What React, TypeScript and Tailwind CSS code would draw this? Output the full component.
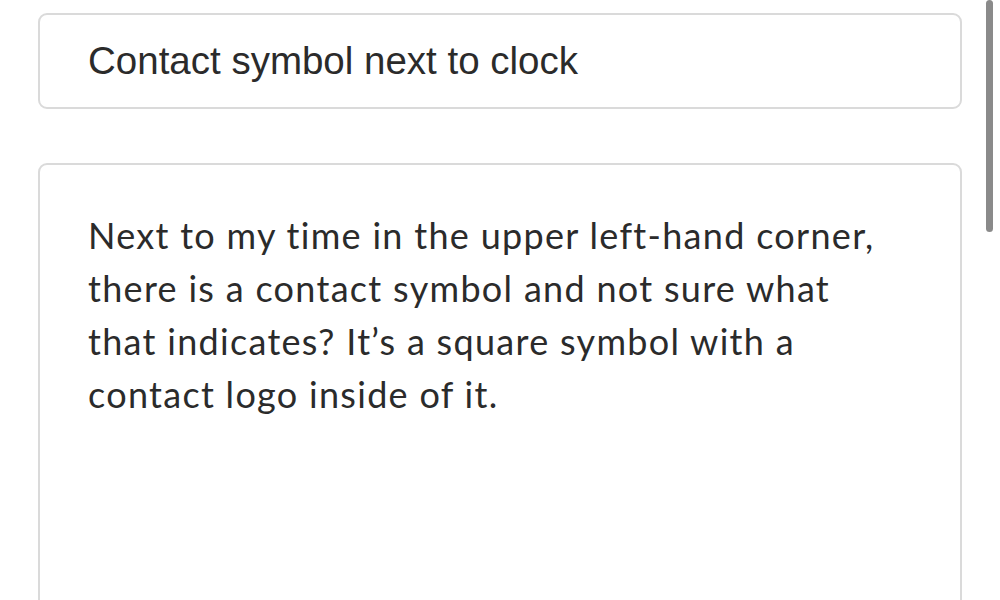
import React from 'react';

const App: React.FC = () => {
  return (
    <div className="relative w-[1000px] h-[600px] overflow-hidden bg-white">
      <div className="flex flex-col gap-[54px] px-[38px] pt-[13px]">
        <div className="flex items-center h-[96px] rounded-[9px] border-2 border-[#dadada] pl-[48px]">
          <span className="text-[38.5px] text-[#2b2b2b] font-['Liberation_Sans',Arial,sans-serif] leading-none">
            Contact symbol next to clock
          </span>
        </div>
        <div className="h-[520px] rounded-[9px] border-2 border-[#dadada] pl-[48px] pt-[44px]">
          <p className="text-[36px] leading-[53px] tracking-[1.3px] text-[#2b2b2b] font-['Lato',sans-serif] [font-variant-ligatures:none] whitespace-nowrap">
            Next to my time in the upper left-hand corner,
            <br />
            there is a contact symbol and not sure what
            <br />
            that indicates? It’s a square symbol with a
            <br />
            contact logo inside of it.
          </p>
        </div>
      </div>
      <div className="absolute right-[7px] top-0 h-[232px] w-[7px] rounded-full bg-[#8a8a8a]" />
    </div>
  );
};

export default App;
